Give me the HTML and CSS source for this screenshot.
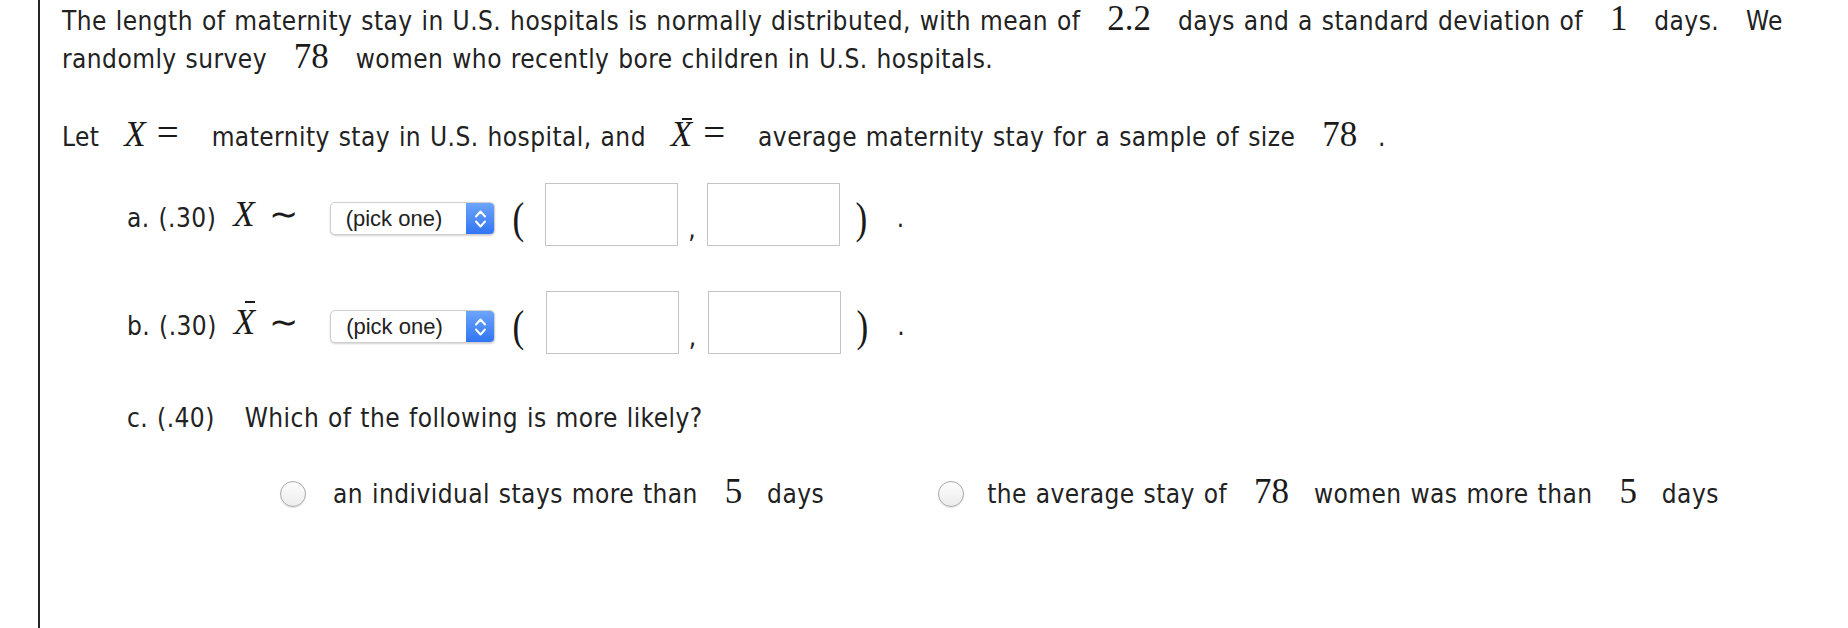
FILE: index.html
```html
<!DOCTYPE html>
<html lang="en">
<head>
<meta charset="utf-8">
<title>Maternity stay</title>
<link rel="stylesheet" href="styles.css">
</head>
<body>
<div class="page">
  <p class="intro">The length of maternity stay in U.S. hospitals is normally distributed, with mean of <span class="m">2.2</span> days and a standard deviation of <span class="m">1</span> days. &nbsp;<span class="we">We</span><br>randomly survey <span class="m">78</span> women who recently bore children in U.S. hospitals.</p>

  <p class="let">Let <span class="m mx"><i>X</i><span class="eq">=</span></span> maternity stay in U.S. hospital, and <span class="m mx"><i class="bar">X</i><span class="eq">=</span></span> average maternity stay for a sample of size <span class="m tail">78</span> .</p>

  <div class="row">
    <span class="label">a. (.30)</span>
    <span class="m rel"><i>X</i><span class="sim">∼</span></span>
    <span class="select"><span class="sel-text">(pick one)</span><span class="sel-btn"><svg width="29" height="33" viewBox="0 0 29 33"><path d="M10 14.5 L14.5 9.5 L19 14.5 M10 19.5 L14.5 24.5 L19 19.5" fill="none" stroke="#fff" stroke-width="2" stroke-linecap="round" stroke-linejoin="round"/></svg></span></span>
    <span class="paren">(</span>
    <input class="box" type="text">
    <span class="comma">,</span>
    <input class="box" type="text">
    <span class="paren close">)</span>
    <span class="dot">.</span>
  </div>

  <div class="row row-b">
    <span class="label">b. (.30)</span>
    <span class="m rel"><i class="bar">X</i><span class="sim">∼</span></span>
    <span class="select"><span class="sel-text">(pick one)</span><span class="sel-btn"><svg width="29" height="33" viewBox="0 0 29 33"><path d="M10 14.5 L14.5 9.5 L19 14.5 M10 19.5 L14.5 24.5 L19 19.5" fill="none" stroke="#fff" stroke-width="2" stroke-linecap="round" stroke-linejoin="round"/></svg></span></span>
    <span class="paren">(</span>
    <input class="box" type="text">
    <span class="comma">,</span>
    <input class="box" type="text">
    <span class="paren close">)</span>
    <span class="dot">.</span>
  </div>

  <p class="part-c"><span class="label-c">c. (.40)</span>Which of the following is more likely?</p>

  <div class="choices">
    <label class="choice"><span class="radio"></span><span>an individual stays more than <span class="m">5</span> days</span></label>
    <label class="choice second"><span class="radio"></span><span>the average stay of <span class="m">78</span> women was more than <span class="m">5</span> days</span></label>
  </div>
</div>
</body>
</html>
```

FILE: styles.css
```css
html, body {
  margin: 0;
  padding: 0;
  background: #fff;
}

body {
  font-family: "DejaVu Sans Condensed", "DejaVu Sans", sans-serif;
  font-size: 26px;
  letter-spacing: 0.45px;
  word-spacing: 1px;
  color: #222;
}

.page {
  min-height: 628px;
  margin-left: 38px;
  border-left: 2px solid #262626;
  padding-left: 22px;
  padding-top: 2px;
  box-sizing: border-box;
}

.intro {
  margin: 0;
  line-height: 38px;
  white-space: nowrap;
}

.we {
  margin-left: 9px;
}

.m {
  font-family: "Liberation Serif", "Times New Roman", serif;
  font-size: 35px;
  line-height: 28px;
  letter-spacing: 0;
  margin: 0 18px 0 18px;
  color: #1a1a1a;
}

.m i {
  font-style: italic;
}

.mx {
  margin: 0 24px 0 16px;
}

.mx .eq {
  margin-left: 11px;
  font-size: 39px;
}

.tail {
  margin-right: 12px;
}

.bar {
  position: relative;
  display: inline-block;
}

.bar::before {
  content: "";
  position: absolute;
  left: 11px;
  top: -3px;
  width: 10px;
  height: 2px;
  background: #1a1a1a;
}

.let {
  margin: 40px 0 0;
  line-height: 38px;
  white-space: nowrap;
}

.row {
  display: flex;
  align-items: flex-start;
  height: 63px;
  margin-top: 27px;
  padding-left: 65px;
}

.row-b {
  margin-top: 45px;
}

.label {
  line-height: 38px;
  margin-top: 16px;
}

.rel {
  margin: 13px 0 0 17px;
  line-height: 38px;
}

.sim {
  margin-left: 14px;
}

.select {
  display: flex;
  width: 165px;
  height: 33px;
  margin: 19px 0 0 32px;
  box-sizing: border-box;
  border: 1px solid #cfcfcf;
  border-radius: 5px;
  background: #fff;
  box-shadow: 0 1px 2px rgba(0, 0, 0, 0.18);
  overflow: hidden;
}

.sel-text {
  flex: 1;
  padding-left: 15px;
  font-family: "Liberation Sans", Arial, sans-serif;
  font-size: 22px;
  letter-spacing: 0;
  word-spacing: 0;
  line-height: 31px;
  color: #222;
}

.sel-btn {
  width: 29px;
  height: 33px;
  margin-top: -1px;
  margin-right: -1px;
  background: linear-gradient(#6ea6fa, #2f73f3);
}

.sel-btn svg {
  display: block;
}

.paren {
  font-family: "Liberation Serif", serif;
  font-size: 44px;
  line-height: 44px;
  letter-spacing: 0;
  margin: 14px 0 0 16px;
  color: #1a1a1a;
  transform: scaleX(0.8);
}

.close {
  margin-left: 14px;
}

.box {
  width: 133px;
  height: 63px;
  margin: 0 0 0 20px;
  padding: 0;
  box-sizing: border-box;
  border: 1px solid #c4c4c4;
  background: #fff;
  font: inherit;
}

.comma {
  line-height: 38px;
  margin: 27px 0 0 10px;
}

.comma + .box {
  margin-left: 11px;
}

.dot {
  line-height: 38px;
  margin: 16px 0 0 28px;
}

.part-c {
  margin: 45px 0 0;
  padding-left: 65px;
  line-height: 38px;
  white-space: nowrap;
}

.label-c {
  margin-right: 30px;
}

.choices {
  display: flex;
  align-items: center;
  margin-top: 38px;
  padding-left: 218px;
  line-height: 38px;
  white-space: nowrap;
}

.choice {
  display: flex;
  align-items: center;
}

.choice .m {
  margin: 0 16px 0 18px;
}

.second {
  margin-left: 114px;
}

.second .radio {
  margin-right: 23px;
}

.radio {
  width: 26px;
  height: 26px;
  box-sizing: border-box;
  margin-right: 27px;
  border: 1px solid #a9a9a9;
  border-radius: 50%;
  background: linear-gradient(#fdfdfd, #ececec);
  box-shadow: 0 1px 1px rgba(0, 0, 0, 0.12);
}
```
